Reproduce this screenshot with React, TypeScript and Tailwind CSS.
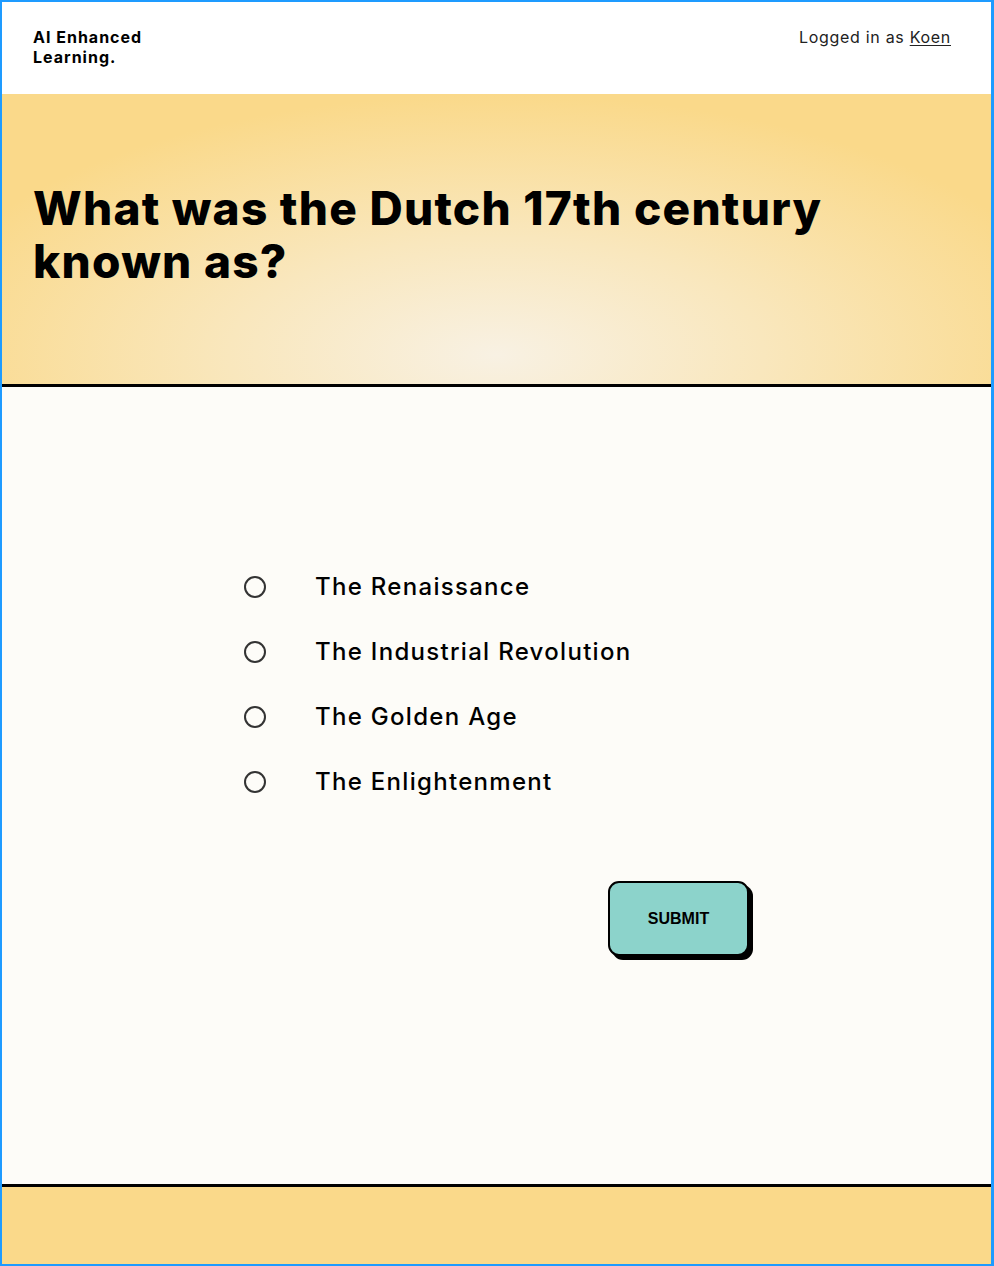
import React from 'react';

const options = [
  'The Renaissance',
  'The Industrial Revolution',
  'The Golden Age',
  'The Enlightenment',
];

const App: React.FC = (): JSX.Element => {
  return (
    <div className="flex h-[1266px] w-full flex-col border-2 border-r-[3px] border-[#1e9bff] bg-white font-['Inter',sans-serif] text-black">
      {/* header */}
      <header className="flex h-[92px] shrink-0 items-start justify-between px-[31px] pt-[25px]">
        <h1 className="text-[16px] font-bold leading-[20px] tracking-[1px]">
          AI Enhanced
          <br />
          Learning.
        </h1>
        <p className="mr-[9px] text-[16px] leading-[20px] tracking-[0.7px] text-[#222]">
          Logged in as <span className="underline underline-offset-2">Koen</span>
        </p>
      </header>

      {/* question */}
      <section className="flex h-[293px] shrink-0 items-center border-b-[3px] border-black bg-[radial-gradient(ellipse_60%_90%_at_50%_90%,#f8f1e3_0%,#f9e7bd_45%,#fad98a_100%)] px-[31px] pb-[8px]">
        <h2 className="max-w-[840px] text-[46px] font-extrabold leading-[53px] tracking-[1.25px]">
          What was the Dutch 17th century known as?
        </h2>
      </section>

      {/* answers */}
      <main className="flex flex-1 flex-col bg-[#fdfcf8] pt-[188px]">
        <div className="ml-[242px] flex w-[510px] flex-col">
          <ul className="flex flex-col gap-[41px]">
            {options.map((opt) => (
              <li key={opt} className="flex items-center gap-[49px]">
                <span className="h-[22px] w-[22px] shrink-0 rounded-full border-2 border-[#333]" />
                <span className="text-[24px] font-medium leading-[24px] tracking-[1.3px]">{opt}</span>
              </li>
            ))}
          </ul>
          <button className="mr-[5px] mt-[87px] flex h-[75px] w-[141px] items-center justify-center self-end rounded-[11px] border-2 border-black bg-[#8cd3cb] font-['Liberation_Sans',sans-serif] text-[16px] font-bold shadow-[4px_4px_0_0_#000]">
            SUBMIT
          </button>
        </div>
      </main>

      {/* footer */}
      <footer className="h-[80px] shrink-0 border-t-[3px] border-black bg-[#fad98a]" />
    </div>
  );
};

export default App;
